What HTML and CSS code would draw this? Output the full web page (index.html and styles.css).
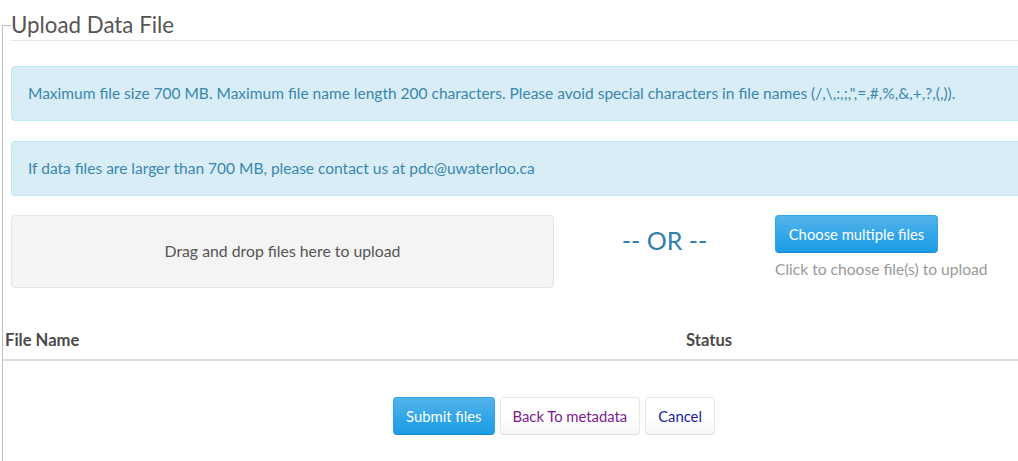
FILE: index.html
```html
<!DOCTYPE html>
<html lang="en">
<head>
<meta charset="utf-8">
<title>Upload Data File</title>
<link rel="stylesheet" href="styles.css">
</head>
<body>
<fieldset class="upload-fieldset">
  <legend class="upload-legend">Upload Data File</legend>
  <div class="upload-body">
    <div class="alert alert-info">Maximum file size 700 MB. Maximum file name length 200 characters. Please avoid special characters in file names (/,\,:,;,",=,#,%,&amp;,+,?,(,)).</div>
    <div class="alert alert-info alert-contact">If data files are larger than 700 MB, please contact us at pdc@uwaterloo.ca</div>
    <div class="choose-row">
      <div class="dropzone">Drag and drop files here to upload</div>
      <div class="or-sep">-- OR --</div>
      <div class="chooser">
        <button class="btn btn-primary btn-choose" type="button">Choose multiple files</button>
        <p class="help-text">Click to choose file(s) to upload</p>
      </div>
    </div>
  </div>
  <table class="file-table">
    <thead>
      <tr><th class="col-name">File Name</th><th>Status</th></tr>
    </thead>
    <tbody></tbody>
  </table>
  <div class="actions">
    <button class="btn btn-primary" type="button">Submit files</button>
    <button class="btn btn-default link-visited" type="button">Back To metadata</button>
    <button class="btn btn-default link-cancel" type="button">Cancel</button>
  </div>
</fieldset>
</body>
</html>
```
FILE: styles.css
```css
html, body {
  margin: 0;
  padding: 0;
  overflow: hidden;
  background: #fff;
}
body {
  font-family: Lato, "Open Sans", sans-serif;
  font-size: 15px;
  line-height: 1.45;
  color: #555;
}
.upload-fieldset {
  box-sizing: border-box;
  width: 1104px;
  margin: 10px 0 0 2px;
  padding: 0 0 80px 0;
  border: 1px solid #bdbdbd;
  min-height: 520px;
}
.upload-legend {
  box-sizing: border-box;
  width: 1086px;
  margin: 0 0 0 8px;
  padding: 0;
  font-size: 22.3px;
  line-height: 30px;
  color: #555;
  border-bottom: 1px solid #e5e5e5;
}
.upload-body {
  padding: 25px 8px 0 8px;
}
.alert {
  box-sizing: border-box;
  height: 55px;
  padding: 15px 16px;
  margin-bottom: 20px;
  font-size: 15.5px;
  line-height: 23px;
  border: 1px solid #bce8f1;
  border-radius: 4px;
  white-space: nowrap;
}
.alert-contact {
  margin-bottom: 19px;
}
.alert-info {
  background: #d9edf7;
  color: #3a87ad;
}
.choose-row {
  display: grid;
  grid-template-columns: 543px 221px 1fr;
}
.dropzone {
  box-sizing: border-box;
  height: 73px;
  display: flex;
  align-items: center;
  justify-content: center;
  background: #f4f4f4;
  border: 1px solid #e3e3e3;
  border-radius: 4px;
  font-size: 15.8px;
  color: #555;
}
.or-sep {
  text-align: center;
  font-size: 25px;
  line-height: 28px;
  padding-top: 11px;
  color: #317eac;
}
.chooser {
  display: flex;
  flex-direction: column;
  align-items: flex-start;
}
.btn {
  box-sizing: border-box;
  height: 38px;
  padding: 8px 12px;
  font-family: inherit;
  font-size: 14.8px;
  line-height: 20px;
  border-radius: 4px;
  cursor: pointer;
}
.btn-choose {
  width: 163px;
  padding: 8px 0;
}
.btn-primary {
  color: #fff;
  border: 1px solid #2fa4e7;
  border-bottom-color: #178acc;
  background-image: linear-gradient(#54b4eb, #2fa4e7 60%, #1d9ce5);
}
.btn-default {
  border: 1px solid #e6e6e6;
  border-bottom-color: #dcdcdc;
  background-image: linear-gradient(#fff, #fff 60%, #f5f5f5);
}
.link-visited { color: #7b1a8b; }
.link-cancel { color: #1a1aa6; }
.help-text {
  margin: 5px 0 0;
  color: #999;
  font-size: 15.6px;
  line-height: 22px;
}
.file-table {
  width: 100%;
  margin-top: 35px;
  border-collapse: collapse;
}
.file-table th {
  text-align: left;
  padding: 7px 2px 9px;
  line-height: 20px;
  font-size: 16.6px;
  font-weight: bold;
  color: #4a4a4a;
  border-bottom: 2px solid #ddd;
}
.file-table .col-name {
  width: 677px;
}
.actions {
  margin-top: 36px;
  display: flex;
  justify-content: center;
  gap: 5px;
}
```
